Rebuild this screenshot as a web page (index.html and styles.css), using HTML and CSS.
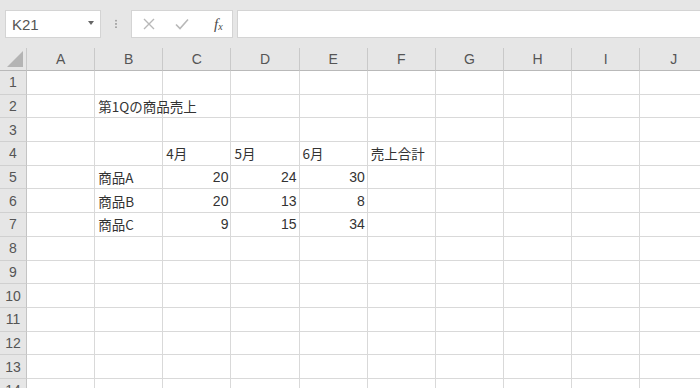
FILE: index.html
```html
<!DOCTYPE html>
<html>
<head>
    <title>Sheet1</title>
    <link rel="stylesheet" href="styles.css">
</head>
<body>
    <div class="toolbar">
        <div class="namebox">
            <span>K21</span>
            <span class="caret"></span>
        </div>
        <div class="grip"></div>
        <div class="fxbox">
            <svg class="btn" width="14" height="14" viewBox="0 0 14 14"><path d="M2 2L12 12M12 2L2 12" stroke="#b8b8b8" stroke-width="1.4" fill="none"/></svg>
            <svg class="btn" width="16" height="14" viewBox="0 0 16 14"><path d="M2 7.5L6 11.5L14 2.5" stroke="#b8b8b8" stroke-width="1.6" fill="none"/></svg>
            <span class="fx">f<sub>x</sub></span>
        </div>
        <div class="formula"></div>
    </div>

    <div class="sheet" id="sheet"></div>

    <script>
        var cols = ["A", "B", "C", "D", "E", "F", "G", "H", "I", "J"];
        // row data: [column index, text, right aligned]
        var data = {
            2: [[1, "第1Qの商品売上"]],
            4: [[2, "4月"], [3, "5月"], [4, "6月"], [5, "売上合計"]],
            5: [[1, "商品A"], [2, "20", true], [3, "24", true], [4, "30", true]],
            6: [[1, "商品B"], [2, "20", true], [3, "13", true], [4, "8", true]],
            7: [[1, "商品C"], [2, "9", true], [3, "15", true], [4, "34", true]]
        };

        var html = '<div class="corner"><span></span></div>';
        cols.forEach(function(c) {
            html += '<div class="colhead">' + c + '</div>';
        });

        for (var r = 1; r <= 14; r++) {
            html += '<div class="rowhead">' + r + '</div>';
            var cells = {};
            (data[r] || []).forEach(function(d) { cells[d[0]] = d; });
            for (var c = 0; c < cols.length; c++) {
                var d = cells[c];
                if (d) {
                    html += '<div class="cell' + (d[2] ? ' num' : '') + '">' + d[1] + '</div>';
                } else {
                    html += '<div class="cell"></div>';
                }
            }
        }
        document.getElementById("sheet").innerHTML = html;
    </script>
</body>
</html>
```

FILE: styles.css
```css
body {
    margin: 0;
    width: 700px;
    height: 388px;
    overflow: hidden;
    background-color: #e6e6e6;
    font-family: "Noto Sans CJK JP", "Noto Sans", sans-serif;
    color: #333;
}

/* formula bar */
.toolbar {
    display: flex;
    align-items: center;
    height: 28px;
    padding: 10px 0 10px 5px;
}

.namebox {
    display: flex;
    align-items: center;
    justify-content: space-between;
    box-sizing: border-box;
    width: 96px;
    height: 28px;
    padding: 0 6px 0 6px;
    background-color: #fff;
    border: 1px solid #d4d4d4;
    font-family: "Liberation Sans", sans-serif;
    font-size: 15px;
    color: #555;
}

.caret {
    width: 0;
    height: 0;
    border-left: 3.5px solid transparent;
    border-right: 3.5px solid transparent;
    border-top: 4px solid #666;
    margin-bottom: 2px;
}

.grip {
    width: 2px;
    height: 10px;
    margin: 0 14px 0 14px;
    background-image: radial-gradient(circle, #a8a8a8 0.8px, transparent 1px);
    background-size: 2px 3.3px;
}

.fxbox {
    display: flex;
    align-items: center;
    box-sizing: border-box;
    width: 102px;
    height: 28px;
    padding-left: 10px;
    gap: 18px;
    background-color: #fff;
    border: 1px solid #d4d4d4;
}

.fx {
    font-family: "Liberation Serif", serif;
    font-style: italic;
    font-size: 15px;
    color: #4a4a4a;
    margin-left: 6px;
}

.fx sub {
    font-size: 10px;
    vertical-align: -1px;
}

.formula {
    flex: 1;
    box-sizing: border-box;
    height: 28px;
    margin-left: 4px;
    background-color: #fff;
    border: 1px solid #d4d4d4;
    border-right: none;
}

/* sheet grid */
.sheet {
    display: grid;
    grid-template-columns: 27px repeat(10, 68.15px);
    grid-template-rows: 23px repeat(14, 23.7px);
    background-color: #fff;
}

.corner {
    position: relative;
    background-color: #e6e6e6;
    border-right: 1px solid #c9c9c9;
    border-bottom: 1px solid #b9b9b9;
}

.corner span {
    position: absolute;
    right: 3px;
    bottom: 3px;
    width: 0;
    height: 0;
    border-left: 16px solid transparent;
    border-bottom: 16px solid #b4b4b4;
}

.colhead {
    display: flex;
    align-items: center;
    justify-content: center;
    background-color: #e6e6e6;
    border-right: 1px solid #c9c9c9;
    border-bottom: 1px solid #b9b9b9;
    font-family: "Liberation Sans", sans-serif;
    font-size: 14px;
    color: #555;
}

.rowhead {
    display: flex;
    align-items: center;
    justify-content: center;
    background-color: #e6e6e6;
    border-right: 1px solid #c4c4c4;
    border-bottom: 1px solid #d0d0d0;
    font-family: "Liberation Sans", sans-serif;
    font-size: 14px;
    color: #555;
}

.cell {
    display: flex;
    align-items: center;
    padding: 0 3px;
    border-right: 1px solid #d9d9d9;
    border-bottom: 1px solid #d9d9d9;
    font-size: 13.5px;
    white-space: nowrap;
    overflow: visible;
}

.cell.num {
    justify-content: flex-end;
    font-family: "Liberation Sans", sans-serif;
    font-size: 14px;
    padding-right: 2px;
}
```
